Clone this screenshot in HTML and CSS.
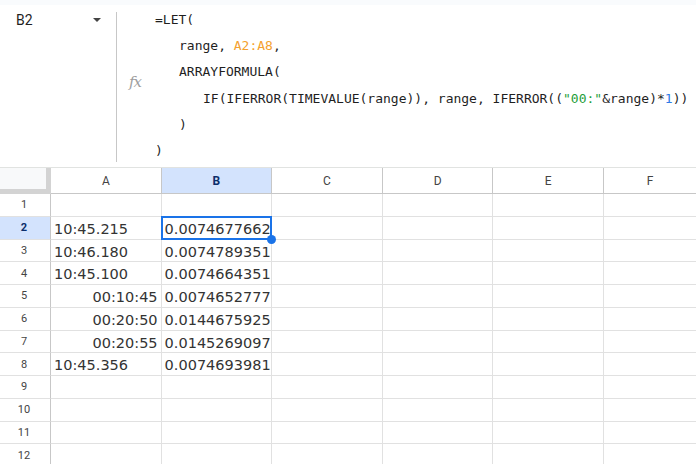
FILE: index.html
```html
<!DOCTYPE html>
<html>
<head>
<meta charset="utf-8">
<link rel="stylesheet" href="styles.css">
</head>
<body>
<div class="top"></div>
<div class="fbar">
  <div class="namebox"><span class="ref">B2</span><span class="caret"></span></div>
  <div class="divider"></div>
  <div class="fx">fx</div>
  <div class="formula">
    <div class="ln">=LET(</div>
    <div class="ln i1">range, <span class="o">A2:A8</span>,</div>
    <div class="ln i1">ARRAYFORMULA(</div>
    <div class="ln i2">IF(IFERROR(TIMEVALUE(range)), range, IFERROR((<span class="g">"00:"</span>&amp;range)*<span class="b">1</span>))</div>
    <div class="ln i1">)</div>
    <div class="ln">)</div>
  </div>
</div>
<div class="grid">
  <div class="corner"></div>
  <div class="ch">A</div><div class="ch selh">B</div><div class="ch">C</div><div class="ch">D</div><div class="ch">E</div><div class="ch last">F</div>

  <div class="rh">1</div><div class="c"></div><div class="c"></div><div class="c"></div><div class="c"></div><div class="c"></div><div class="c last"></div>
  <div class="rh selh">2</div><div class="c"><span class="v">10:45.215</span></div><div class="c sel"><span class="v">0.0074677662</span><span class="handle"></span></div><div class="c"></div><div class="c"></div><div class="c"></div><div class="c last"></div>
  <div class="rh">3</div><div class="c"><span class="v">10:46.180</span></div><div class="c"><span class="v">0.0074789351</span></div><div class="c"></div><div class="c"></div><div class="c"></div><div class="c last"></div>
  <div class="rh">4</div><div class="c"><span class="v">10:45.100</span></div><div class="c"><span class="v">0.0074664351</span></div><div class="c"></div><div class="c"></div><div class="c"></div><div class="c last"></div>
  <div class="rh">5</div><div class="c"><span class="v r">00:10:45</span></div><div class="c"><span class="v">0.0074652777</span></div><div class="c"></div><div class="c"></div><div class="c"></div><div class="c last"></div>
  <div class="rh">6</div><div class="c"><span class="v r">00:20:50</span></div><div class="c"><span class="v">0.0144675925</span></div><div class="c"></div><div class="c"></div><div class="c"></div><div class="c last"></div>
  <div class="rh">7</div><div class="c"><span class="v r">00:20:55</span></div><div class="c"><span class="v">0.0145269097</span></div><div class="c"></div><div class="c"></div><div class="c"></div><div class="c last"></div>
  <div class="rh">8</div><div class="c"><span class="v">10:45.356</span></div><div class="c"><span class="v">0.0074693981</span></div><div class="c"></div><div class="c"></div><div class="c"></div><div class="c last"></div>
  <div class="rh">9</div><div class="c"></div><div class="c"></div><div class="c"></div><div class="c"></div><div class="c"></div><div class="c last"></div>
  <div class="rh">10</div><div class="c"></div><div class="c"></div><div class="c"></div><div class="c"></div><div class="c"></div><div class="c last"></div>
  <div class="rh">11</div><div class="c"></div><div class="c"></div><div class="c"></div><div class="c"></div><div class="c"></div><div class="c last"></div>
  <div class="rh">12</div><div class="c"></div><div class="c"></div><div class="c"></div><div class="c"></div><div class="c"></div><div class="c last"></div>
</div>
</body>
</html>
```
FILE: styles.css
```css
* { box-sizing: border-box; }
html, body { margin: 0; padding: 0; }
body {
  width: 696px;
  height: 464px;
  overflow: hidden;
  background: #fff;
  font-family: Roboto, "Liberation Sans", Arial, sans-serif;
  color: #1f1f1f;
}
.top { height: 5px; background: #f9fbfd; }
.fbar {
  height: 163px;
  display: flex;
  border-bottom: 1px solid #e1e3e1;
}
.namebox {
  width: 116px;
  display: flex;
  align-items: flex-start;
  justify-content: space-between;
  padding: 6px 16px 0 16px;
}
.ref { font-size: 14px; line-height: 18px; color: #1f1f1f; }
.caret {
  margin-top: 7px;
  margin-right: -1px;
  width: 0; height: 0;
  border-left: 4px solid transparent;
  border-right: 4px solid transparent;
  border-top: 4px solid #444;
}
.divider {
  width: 1px;
  margin-top: 7px;
  height: 150px;
  background: #c7c7c7;
}
.fx {
  width: 38px;
  display: flex;
  align-items: center;
  padding-left: 12px;
  padding-bottom: 8px;
  font-family: "DejaVu Serif", "Liberation Serif", serif;
  font-style: italic;
  font-size: 15px;
  color: #9e9e9e;
  letter-spacing: -1px;
}
.formula {
  padding-top: 2px;
  font-family: "DejaVu Sans Mono", "Liberation Mono", monospace;
  font-size: 13px;
  color: #1f1f1f;
  white-space: nowrap;
}
.ln { height: 26.2px; line-height: 26px; }
.i1 { padding-left: 24px; }
.i2 { padding-left: 48px; }
.o { color: #f4a12e; }
.g { color: #1e9e3a; }
.b { color: #2f7be6; }

.grid {
  display: grid;
  grid-template-columns: 51px repeat(5, 110.6px) 1fr;
  grid-template-rows: 26px repeat(12, 22.75px);
}
.corner {
  background: #f8f9fa;
  border-right: 5px solid #d3d3d3;
  border-bottom: 5px solid #d3d3d3;
}
.ch {
  border-right: 1px solid #c7c7c7;
  border-bottom: 1px solid #c7c7c7;
  display: flex;
  align-items: center;
  justify-content: center;
  font-size: 12px;
  color: #444;
  padding-top: 1px;
}
.rh {
  border-right: 1px solid #c7c7c7;
  border-bottom: 1px solid #e1e1e1;
  display: flex;
  align-items: center;
  justify-content: center;
  font-size: 11px;
  color: #444;
  padding-right: 2px;
}
.selh {
  background: #d3e3fd;
  color: #0b2e6b;
  font-weight: bold;
}
.c {
  position: relative;
  border-right: 1px solid #e1e1e1;
  border-bottom: 1px solid #e1e1e1;
  min-width: 0;
}
.last { border-right: none; }
.v {
  display: block;
  overflow: hidden;
  white-space: nowrap;
  font-family: "DejaVu Sans", Verdana, sans-serif;
  font-size: 14.5px;
  line-height: 22px;
  padding-top: 1px;
  color: #333;
  padding-left: 3px;
}
.v.r { text-align: right; padding-right: 3px; padding-left: 0; }
.sel::after {
  content: "";
  position: absolute;
  top: -1px;
  left: -1px;
  right: -1px;
  bottom: -1px;
  border: 2px solid #1a73e8;
  pointer-events: none;
}
.handle {
  position: absolute;
  right: -5px;
  bottom: -5px;
  width: 9px;
  height: 9px;
  border-radius: 50%;
  background: #1a73e8;
  z-index: 2;
}
```
